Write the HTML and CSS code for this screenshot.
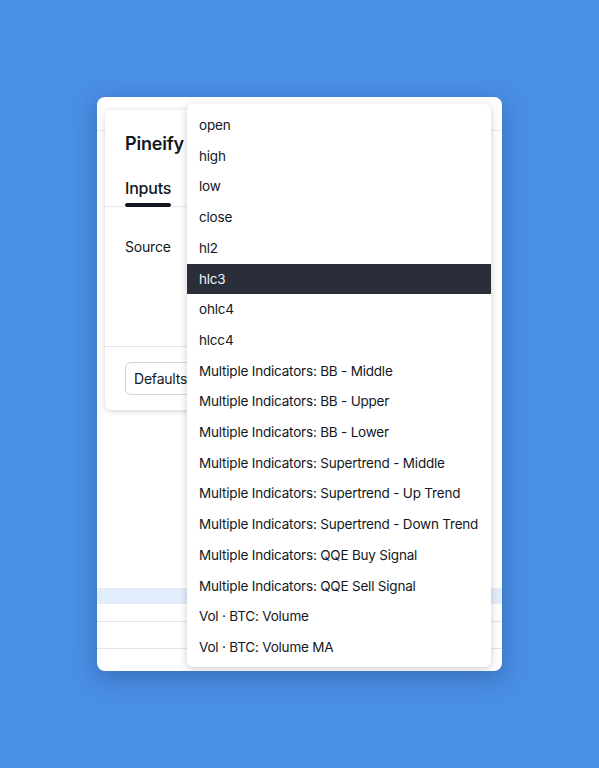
FILE: index.html
```html
<!doctype html>
<html>
<head>
 <title>Pineify - Source</title>
 <meta name=viewport content="width=device-width, initial-scale=1">
 <link rel="stylesheet" href="styles.css">
</head>
<body>
<div class=window>
 <div class=topbar></div>
 <div class=spacer></div>
 <div class="row hilite"></div>
 <div class="row line"></div>
 <div class="row line2"></div>

 <div class=card>
  <div class=title>Pineify</div>
  <div class=tabs>
   <div class="tab active">Inputs</div>
  </div>
  <div class=field>
   <span class=label>Source</span>
  </div>
  <div class=footer>
   <button class=btn>Defaults</button>
  </div>
 </div>

 <ul class=menu>
  <li>open</li>
  <li>high</li>
  <li>low</li>
  <li>close</li>
  <li>hl2</li>
  <li class=selected>hlc3</li>
  <li>ohlc4</li>
  <li>hlcc4</li>
  <li>Multiple Indicators: BB - Middle</li>
  <li>Multiple Indicators: BB - Upper</li>
  <li>Multiple Indicators: BB - Lower</li>
  <li>Multiple Indicators: Supertrend - Middle</li>
  <li>Multiple Indicators: Supertrend - Up Trend</li>
  <li>Multiple Indicators: Supertrend - Down Trend</li>
  <li>Multiple Indicators: QQE Buy Signal</li>
  <li>Multiple Indicators: QQE Sell Signal</li>
  <li>Vol &middot; BTC: Volume</li>
  <li>Vol &middot; BTC: Volume MA</li>
 </ul>
</div>
</body>
</html>
```
FILE: styles.css
```css
html, body {margin:0; height:100%;}
body {
  background:#4a8fe6;
  font-family: Inter, "Noto Sans", sans-serif;
  color:#131722;
  padding:97px 0 0 97px;
  box-sizing:border-box;
}
.window {
  position:relative;
  width:405px;
  height:574px;
  background:white;
  border-radius:8px;
  box-shadow:0 6px 24px rgba(20,40,90,0.35);
  overflow:hidden;
}
.topbar {height:33px; border-bottom:1px solid #e6e8ee;}
.spacer {height:457px;}
.row {height:16px;}
.hilite {background:#e3eefc;}
.line {height:17px; border-bottom:1px solid #e0e3eb;}
.line2 {height:26px; border-bottom:1px solid #e0e3eb;}

.card {
  position:absolute;
  left:8px;
  top:13px;
  width:320px;
  height:300px;
  background:white;
  border-radius:6px;
  box-shadow:0 1px 6px rgba(0,0,0,0.18);
  box-sizing:border-box;
}
.title {
  font-size:18px;
  font-weight:600;
  padding:23px 20px 0;
  line-height:22px;
  letter-spacing:-0.2px;
}
.tabs {
  margin-top:23px;
  padding:0 20px;
  display:flex;
  border-bottom:1px solid #e8eaf0;
}
.tab {
  font-size:16px;
  font-weight:500;
  line-height:20px;
  padding-bottom:8px;
  position:relative;
  letter-spacing:-0.2px;
}
.tab.active::after {
  content:"";
  position:absolute;
  left:0; right:0; bottom:-1px;
  height:4px;
  border-radius:2px;
  background:#131722;
}
.field {padding:29px 20px 0; height:140px; box-sizing:border-box; border-bottom:1px solid #e0e3eb;}
.label {font-size:14px; line-height:18px; letter-spacing:-0.2px;}
.footer {padding:15px 20px;}
.btn {
  height:33px;
  padding:0 8px;
  font-family:inherit;
  font-size:14px;
  letter-spacing:-0.2px;
  color:#131722;
  background:white;
  border:1px solid #d1d4dc;
  border-radius:6px;
  width:90px;
  text-align:left;
}

.menu {
  position:absolute;
  left:90px;
  top:7px;
  width:304px;
  height:563px;
  margin:0;
  padding:6px 0 0;
  list-style:none;
  background:white;
  border-radius:6px;
  box-shadow:0 2px 8px rgba(0,0,0,0.2);
  box-sizing:border-box;
}
.menu li {
  font-size:13.5px;
  letter-spacing:-0.2px;
  line-height:20.7px;
  padding:5px 12px;
  white-space:nowrap;
}
.menu li.selected {background:#2a2e39; color:#f0f3fa;}
```
